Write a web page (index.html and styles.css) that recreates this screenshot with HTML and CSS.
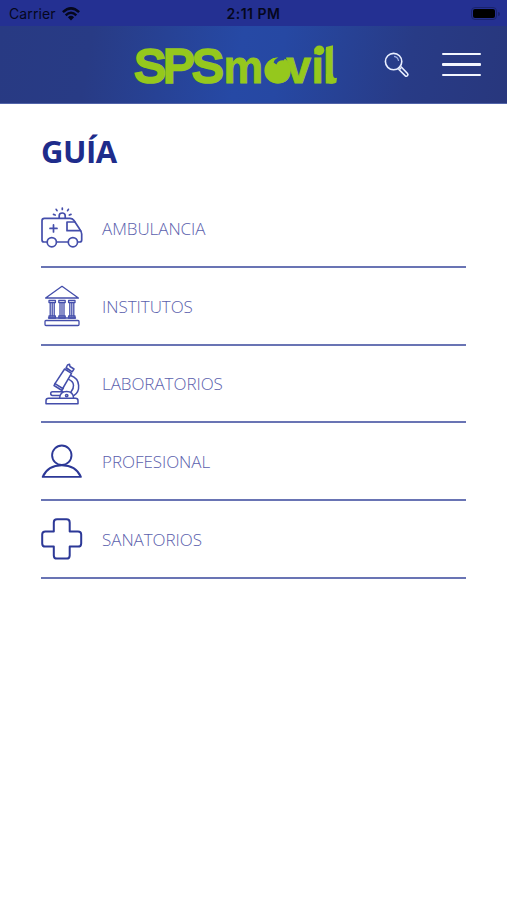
FILE: index.html
```html
<!DOCTYPE html>
<html lang="es">
<head>
<meta charset="utf-8">
<title>SPSmovil</title>
<link rel="stylesheet" href="styles.css">
</head>
<body>
<div class="status">
  <div class="carrier"><span>Carrier</span>
    <svg width="18" height="14" viewBox="0 0 18 14"><g fill="none" stroke="#05071c" stroke-width="2.5"><path d="M.9 5.2Q9-2.5 17.1 5.2"/><path d="M3.7 8.3Q9 3.3 14.3 8.3"/></g><path d="M5.9 10.2Q9 7.4 12.1 10.2L9 13.5Z" fill="#05071c"/></svg>
  </div>
  <span class="clock">2:11 PM</span>
  <div class="power"><span class="battery"></span><span class="tip"></span></div>
</div>
<header class="header">
  <svg class="logo" width="206" height="76" viewBox="133 27 206 76">
    <g class="logo-text">
      <text class="caps" x="134.2 163.2 192.1" y="81.6">SPS</text>
      <text class="lower" transform="translate(223.6 83) scale(.95 1)" x="0 43 66 92.5 104.7" y="0">movil</text>
    </g>
    <circle cx="277.3" cy="70.7" r="12.9" fill="#95c81d"/>
    <path d="M277 55H287L283.6 60.4C280.3 60 277.8 61.6 276.4 64.4L273.6 62.6Q274.3 59.5 278 57.6Z" fill="#2648a3"/>
    <path d="M326 47L333 45.2V50H326ZM326 74H333Q333 79.3 337 77.7L336.4 82.4Q334 84 331 83.7Q326 83.4 326 77Z" fill="#95c81d"/>
    <circle cx="319.4" cy="50.3" r="4.9" fill="#95c81d"/>
  </svg>
  <svg class="search" width="26" height="26" viewBox="0 0 26 26" fill="none" stroke="#e9efff" stroke-width="1.6">
    <circle cx="9.6" cy="9.6" r="8.2"/><path d="M10 4.4Q13.8 5 14.6 9" stroke="#9caee0" stroke-width="1.2"/><path d="M14.4 17L21.3 23.8Q22.4 24.7 23.4 23.7Q24.5 22.6 23.5 21.5L16.8 14.5"/><path d="M14.8 14.8L17 17.2"/>
  </svg>
  <div class="menu"><span></span><span></span><span></span></div>
</header>
<main>
  <h1>GUÍA</h1>
  <ul class="list">
    <li>
      <svg class="icon" viewBox="0 0 42 42"><g stroke-width="1.7"><path d="M5.5 35H3Q1 35 1 33V13.8Q1 11.4 3.4 11.4H29Q31.4 11.4 32.8 13.3L38.6 22Q40.7 24.8 40.7 27V33Q40.7 35 38.7 35H36.8"/><path d="M16 35H26.7M34 15H26V23.7H39.5M18.2 11V8.7Q18.2 6 21.2 6T24.2 8.7V11"/><circle cx="10.8" cy="35.2" r="4.6"/><circle cx="31.9" cy="35.2" r="4.6"/><path d="M9 21.4H16M12.5 17.9V24.9M21.3 1V2.5M15.2 2.3L16 3.7M27.4 2.3L26.6 3.7M12.5 7.4L14.2 8M30 7.4L28.3 8"/></g></svg>
      <span>AMBULANCIA</span>
    </li>
    <li>
      <svg class="icon" viewBox="0 0 42 42"><g stroke-width="1.3"><path d="M21 1.3L37.4 13H4.6Z"/><rect x="4" y="35.5" width="34" height="5" rx="1"/><path d="M7.5 33H34.5"/><path d="M8 15.4H14.4V17.5H8ZM17.8 15.4H24.2V17.5H17.8ZM27.6 15.4H34V17.5H27.6ZM8 31H14.4V33H8ZM17.8 31H24.2V33H17.8ZM27.6 31H34V33H27.6Z"/><path d="M9.2 17.5V31M11.2 17.5V31M13.2 17.5V31M19 17.5V31M21 17.5V31M23 17.5V31M28.8 17.5V31M30.8 17.5V31M32.8 17.5V31"/></g></svg>
      <span>INSTITUTOS</span>
    </li>
    <li>
      <svg class="icon" viewBox="0 0 42 42"><g stroke-width="1.5"><path d="M7.5 35.3H34.5Q37 35.3 37 37.8V40.7H5V37.8Q5 35.3 7.5 35.3Z"/><path d="M18.5 32.5H11.5Q9.7 32.5 9.7 30.6T11.5 28.7H22"/><path d="M18.6 35.2Q19 28.5 25.6 28.5T32.6 35.2"/><circle cx="25.7" cy="32.6" r="1.2"/><path d="M23.6 6L14 20.7L21.7 25.5L30.5 10.3Z"/><path d="M14.2 20.3L13 22.5L21 27.5L22.4 25M26 5.2L30.2 8M26.5 2L25 5L31.2 8.8L33 6L29 3.5L28.5 1.2L26.5 2Z"/><path d="M29.7 12.5C40 16 39.5 28.5 32.8 32.7M27.7 16.4C34 19 33.5 25 29.8 29.2"/></g></svg>
      <span>LABORATORIOS</span>
    </li>
    <li>
      <svg class="icon dark" viewBox="0 0 42 42"><g stroke-width="1.9"><circle cx="20.8" cy="14.2" r="9.7"/><path d="M1.7 35.9C5.5 27.3 13 24.3 20.8 24.3S36.1 27.3 39.9 35.9Z"/></g></svg>
      <span>PROFESIONAL</span>
    </li>
    <li>
      <svg class="icon dark" viewBox="0 0 42 42"><path stroke-width="2" d="M16 1.2H25.5Q28.7 1.2 28.7 4.4V13.4H37Q40.2 13.4 40.2 16.6V25.4Q40.2 28.6 37 28.6H28.7V37.4Q28.7 40.6 25.5 40.6H16Q12.8 40.6 12.8 37.4V28.6H4.4Q1.2 28.6 1.2 25.4V16.6Q1.2 13.4 4.4 13.4H12.8V4.4Q12.8 1.2 16 1.2Z"/></svg>
      <span>SANATORIOS</span>
    </li>
  </ul>
</main>
</body>
</html>
```
FILE: styles.css
```css
* { box-sizing: border-box; }
body { margin: 0; min-height: 900px; background: #fff; font-family: "Open Sans", sans-serif; }
.status { display: grid; grid-template-columns: 1fr auto 1fr; align-items: center; height: 26px; padding: 1px 7px 0 7px; background: #243092; color: #05071c; font: 14px/20px Inter, sans-serif; }
.carrier { display: flex; align-items: center; gap: 6px; padding-left: 2px; letter-spacing: .1px; }
.clock { font-weight: 600; font-size: 14px; letter-spacing: .5px; }
.power { display: flex; justify-content: flex-end; align-items: center; gap: 1px; }
.battery { width: 26px; height: 13px; border: 1px solid #1a236d; border-radius: 4px; background: #000; background-clip: content-box; padding: 1px; }
.tip { width: 2px; height: 4px; border-radius: 0 2px 2px 0; background: #1a236d; }
.header { display: flex; align-items: center; height: 78px; padding: 0 26px 0 133px; border-bottom: 1px solid #5264a8; background: linear-gradient(100deg, #283a83 0%, #283b85 18%, #2649a5 47%, #2648a3 55%, #283b86 80%, #28377d 100%); }
.logo { flex: none; overflow: visible; }
.logo-text { fill: #95c81d; stroke: #95c81d; font-family: "Liberation Sans", sans-serif; }
.caps { font-size: 47px; stroke-width: 3.6px; stroke-linejoin: miter; }
.lower { font-size: 47px; font-weight: 700; stroke-width: .9px; }
.search { margin-left: 45px; }
.menu { display: flex; flex-direction: column; gap: 8px; width: 39px; margin-left: auto; }
.menu span { height: 2.4px; border-radius: 1px; background: #f3f6ff; }
main { padding: 25px 41px 0; }
h1 { margin: 0; height: 61px; color: #1e2c8b; font-size: 31px; line-height: 44px; font-weight: 700; letter-spacing: -.5px; }
.list { margin: 0; padding: 0; list-style: none; }
.list li { display: flex; align-items: center; gap: 19px; height: 77.75px; padding-top: 1px; border-bottom: 2px solid #6974b4; color: #5b61ad; font-size: 17px; font-weight: 300; letter-spacing: -.05px; }
.icon { width: 42px; height: 42px; flex: none; fill: none; stroke: #444eab; stroke-linejoin: round; stroke-linecap: round; }
.dark { stroke: #2c3897; }
```
